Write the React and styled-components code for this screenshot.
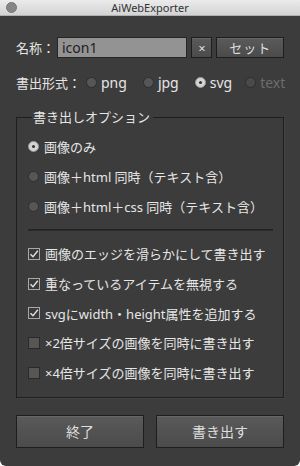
import styled, { createGlobalStyle } from "styled-components";

const GlobalStyle = createGlobalStyle`
  html, body {
    margin: 0;
    padding: 0;
    background: #ffffff;
  }
  * {
    box-sizing: border-box;
  }
`;

const FONT = `"Noto Sans", "Noto Sans CJK JP", sans-serif`;

const Window = styled.div`
  width: 300px;
  height: 466px;
  display: flex;
  flex-direction: column;
  background: #3c3c3c;
  border-radius: 0 0 6px 6px;
  overflow: hidden;
  font-family: ${FONT};
  color: #e4e4e4;
  font-size: 13px;
`;

const TitleBar = styled.div`
  height: 16px;
  flex: none;
  display: flex;
  align-items: center;
  justify-content: center;
  position: relative;
  background: linear-gradient(#ebebeb, #d3d3d3);
  border-bottom: 1px solid #b0b0b0;
  color: #333;
  font-size: 11px;
  line-height: 16px;
`;

const CloseDot = styled.span`
  position: absolute;
  left: 6px;
  top: 2px;
  width: 11px;
  height: 11px;
  border-radius: 50%;
  background: #858585;
  border: 1px solid #777;
`;

const Content = styled.div`
  flex: 1;
  display: flex;
  flex-direction: column;
  padding: 21px 16px 0 16px;
`;

const NameRow = styled.div`
  display: flex;
  align-items: center;
  height: 21px;
`;

const Label = styled.span`
  width: ${(p) => p.$w || "auto"};
  flex: none;
  white-space: nowrap;
`;

const NameInput = styled.div`
  width: 131px;
  height: 21px;
  background: #939393;
  border: 1px solid #262626;
  color: #1e1e1e;
  font-size: 14px;
  line-height: 19px;
  padding-left: 4px;
  margin-left: -1px;
`;

const Button = styled.button`
  font-family: ${FONT};
  color: #dedede;
  font-size: ${(p) => p.$fs || "13px"};
  width: ${(p) => p.$w};
  height: ${(p) => p.$h || "21px"};
  margin-left: ${(p) => p.$ml || "0"};
  padding: 0;
  background: linear-gradient(#5a5a5a, #4b4b4b);
  border: 1px solid #1e1e1e;
  box-shadow: inset 0 1px 0 rgba(255, 255, 255, 0.08);
  display: flex;
  align-items: center;
  justify-content: center;
  letter-spacing: ${(p) => p.$ls || "0"};
`;

const FormatRow = styled.div`
  display: flex;
  align-items: center;
  height: 20px;
  margin-top: 14px;
`;

const RadioItem = styled.label`
  display: flex;
  align-items: center;
  gap: 4px;
  margin-right: ${(p) => p.$mr || "0"};
  color: ${(p) => (p.$disabled ? "#6c6c6c" : "#e6e6e6")};
  font-size: 14px;
`;

const RadioDot = styled.span`
  width: 11px;
  height: 11px;
  flex: none;
  border-radius: 50%;
  display: flex;
  align-items: center;
  justify-content: center;
  background: ${(p) =>
    p.$checked ? "#d4d4d4" : p.$disabled ? "#4a4a4a" : "#565656"};
  border: 1px solid ${(p) => (p.$checked ? "#9a9a9a" : "#2e2e2e")};

  &::after {
    content: "";
    width: 3px;
    height: 3px;
    border-radius: 50%;
    background: #333;
    display: ${(p) => (p.$checked ? "block" : "none")};
  }
`;

const Group = styled.fieldset`
  margin: 17px 0 0 0;
  padding: 7px 10px 9px 11px;
  border: 1px solid #1f1f1f;
  box-shadow: 1px 1px 0 rgba(255, 255, 255, 0.04);
  min-width: 0;
`;

const Legend = styled.legend`
  padding: 0 3px 0 1px;
  margin-left: 4px;
  line-height: 16px;
  color: #e6e6e6;
`;

const OptionRow = styled.div`
  display: flex;
  align-items: center;
  gap: 5px;
  height: 29.7px;
  white-space: nowrap;
  color: #e6e6e6;
`;

const Separator = styled.div`
  height: 1px;
  background: #222;
  margin: 8px 0 8px 0;
  border-bottom: 1px solid rgba(255, 255, 255, 0.04);
  box-sizing: content-box;
`;

const CheckBox = styled.span`
  width: 12px;
  height: 12px;
  flex: none;
  display: flex;
  align-items: center;
  justify-content: center;
  background: ${(p) => (p.$checked ? "#3a3a3a" : "#565656")};
  border: 1px solid ${(p) => (p.$checked ? "#a8a8a8" : "#2a2a2a")};
`;

const ButtonRow = styled.div`
  display: flex;
  gap: 12px;
  margin-top: 17px;
`;

const Check = () => (
  <svg width="10" height="10" viewBox="0 0 10 10">
    <path d="M1.5 5.2 L4 7.8 L8.8 1.8" fill="none" stroke="#e0e0e0" strokeWidth="1.4" />
  </svg>
);

const formats = [
  { name: "png", mr: "16px" },
  { name: "jpg", mr: "16px" },
  { name: "svg", mr: "13px", checked: true },
  { name: "text", disabled: true },
];

const modes = [
  { text: "画像のみ", checked: true },
  { text: "画像＋html 同時（テキスト含）" },
  { text: "画像＋html＋css 同時（テキスト含）" },
];

const options = [
  { text: "画像のエッジを滑らかにして書き出す", checked: true },
  { text: "重なっているアイテムを無視する", checked: true },
  { text: "svgにwidth・height属性を追加する", checked: true },
  { text: "×2倍サイズの画像を同時に書き出す" },
  { text: "×4倍サイズの画像を同時に書き出す" },
];

export default function App() {
  return (
    <>
      <GlobalStyle />
      <Window>
        <TitleBar>
          <CloseDot />
          AiWebExporter
        </TitleBar>
        <Content>
          <NameRow>
            <Label $w="42px">名称：</Label>
            <NameInput>icon1</NameInput>
            <Button $w="21px" $ml="4px" $fs="13px">×</Button>
            <Button $w="68px" $ml="4px" $ls="1px">セット</Button>
          </NameRow>
          <FormatRow>
            <Label $w="70px">書出形式：</Label>
            {formats.map((f) => (
              <RadioItem key={f.name} $mr={f.mr} $disabled={f.disabled}>
                <RadioDot $checked={f.checked} $disabled={f.disabled} />
                {f.name}
              </RadioItem>
            ))}
          </FormatRow>
          <Group>
            <Legend>書き出しオプション</Legend>
            {modes.map((m) => (
              <OptionRow key={m.text}>
                <RadioDot $checked={m.checked} />
                {m.text}
              </OptionRow>
            ))}
            <Separator />
            {options.map((o) => (
              <OptionRow key={o.text}>
                <CheckBox $checked={o.checked}>{o.checked && <Check />}</CheckBox>
                {o.text}
              </OptionRow>
            ))}
          </Group>
          <ButtonRow>
            <Button $w="128px" $h="33px" $fs="14px">終了</Button>
            <Button $w="128px" $h="33px" $fs="14px">書き出す</Button>
          </ButtonRow>
        </Content>
      </Window>
    </>
  );
}
